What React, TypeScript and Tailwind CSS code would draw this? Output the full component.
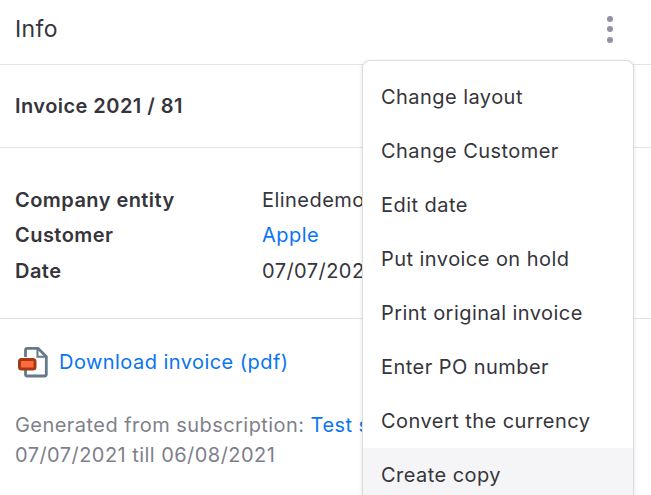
const menuItems = [
  "Change layout",
  "Change Customer",
  "Edit date",
  "Put invoice on hold",
  "Print original invoice",
  "Enter PO number",
  "Convert the currency",
  "Create copy",
];

function PdfIcon() {
  return (
    <svg width="34" height="34" viewBox="0 0 34 34" fill="none" className="shrink-0">
      <path
        d="M9.500 12V5C9.500 4 10.200 3.300 11.200 3.300H22L30.300 11.500V29.300C30.300 30.300 29.600 31 28.600 31H11.200C10.200 31 9.500 30.300 9.500 29.300V25"
        stroke="#66788a"
        strokeWidth="2.800"
      />
      <path d="M21.500 3.500V11.800H30" stroke="#66788a" strokeWidth="2" />
      <rect x="3.500" y="14.500" width="15.500" height="9.500" rx="2" fill="#ff6a3c" stroke="#a33a12" strokeWidth="3" />
    </svg>
  );
}

export default function App() {
  return (
    <div className="relative h-[495px] w-[651px] overflow-hidden bg-white font-['Inter',sans-serif] tracking-[0.45px] text-[#35353b]">
      <div className="flex h-[65px] items-center justify-between border-b border-[#e3e3e6] pb-[6px] pl-[15px] pr-[38px]">
        <h1 className="text-[23px] font-normal tracking-[0.4px]">Info</h1>
        <div className="flex flex-col gap-[4.500px]">
          <span className="h-[6px] w-[6px] rounded-full bg-[#9292a0]" />
          <span className="h-[6px] w-[6px] rounded-full bg-[#9292a0]" />
          <span className="h-[6px] w-[6px] rounded-full bg-[#9292a0]" />
        </div>
      </div>

      <div className="flex h-[83px] items-center border-b border-[#e3e3e6] px-[15px]">
        <p className="text-[20px] font-semibold">Invoice 2021 / 81</p>
      </div>

      <div className="flex h-[171px] flex-col border-b border-[#e3e3e6] px-[15px] pt-[34.600px] text-[20px] leading-[35.500px]">
        <div className="flex">
          <span className="w-[247px] font-semibold">Company entity</span>
          <span>Elinedemo</span>
        </div>
        <div className="flex">
          <span className="w-[247px] font-semibold">Customer</span>
          <span className="text-[#0a75f0]">Apple</span>
        </div>
        <div className="flex">
          <span className="w-[247px] font-semibold">Date</span>
          <span>07/07/2021</span>
        </div>
      </div>

      <div className="flex items-center gap-[9px] pl-[16px] pt-[26px] text-[20px] text-[#0a75f0]">
        <PdfIcon />
        <a>Download invoice (pdf)</a>
      </div>

      <p className="w-[640px] whitespace-nowrap px-[15px] pt-[31px] text-[20px] leading-[30px] text-[#7f7f8b]">
        Generated from subscription: <span className="text-[#0a75f0]">Test subscription</span>
        <br />
        07/07/2021 till 06/08/2021
      </p>

      <div className="absolute left-[362px] top-[60px] w-[272px] rounded-t-[8px] border border-[#dcdcdf] bg-white pt-[9px] shadow-[0_1px_4px_rgba(0,0,0,0.12)]">
        {menuItems.map((item) => (
          <div
            key={item}
            className={`flex h-[54px] items-center px-[18px] text-[20px] ${
              item === "Create copy" ? "bg-[#f5f5f7]" : ""
            }`}
          >
            {item}
          </div>
        ))}
      </div>
    </div>
  );
}
